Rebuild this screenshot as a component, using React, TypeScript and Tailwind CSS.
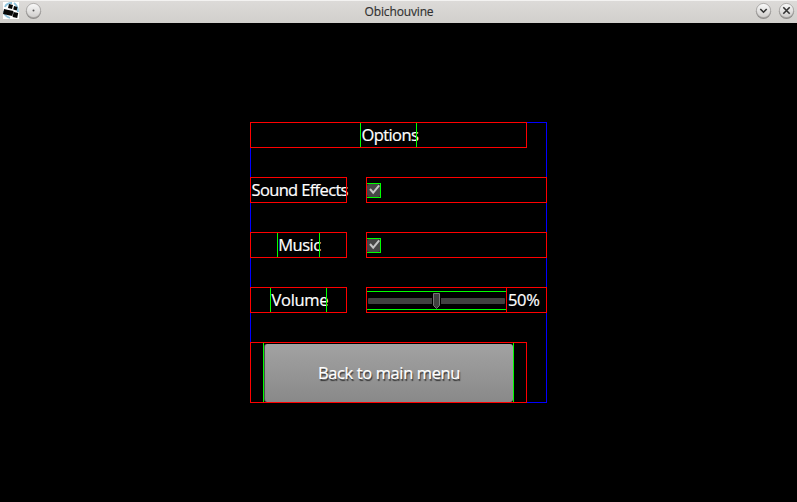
import type { ReactNode } from "react";

function Cell({ className, children }: { className: string; children?: ReactNode }) {
  return (
    <div className={`relative flex ${className}`}>
      {children}
      <div className="pointer-events-none absolute inset-0 border border-[#ff0000]" />
    </div>
  );
}

function Label({ text, box, type, lines = true }: { text: string; box: string; type: string; lines?: boolean }) {
  return (
    <div className={`relative h-[26px] ${box}`}>
      <span className={`block whitespace-nowrap text-[16.5px] leading-[26px] [-webkit-text-stroke:0.2px_white] ${type}`}>{text}</span>
      {lines && <div className="absolute inset-0 border-x border-[#00ff00]" />}
    </div>
  );
}

function Check() {
  return (
    <div className="mt-[6px] h-[15px] w-[15px] border border-[#00ff00] bg-[#202020]">
      <svg width="13" height="13" viewBox="0 0 13 13" className="block">
        <rect width="13" height="13" rx="2.5" fill="#464646" />
        <path d="M3 5 6.2 8.6 12.2 1.4" fill="none" stroke="#c4c4c4" strokeWidth="2" />
      </svg>
    </div>
  );
}

function RoundButton({ children }: { children: ReactNode }) {
  return (
    <svg width="17" height="18" viewBox="0 0 17 18" className="block">
      <defs>
        <linearGradient id="knob" x1="0" y1="0" x2="0" y2="1">
          <stop offset="0" stopColor="#fafafa" />
          <stop offset="1" stopColor="#cfcdcb" />
        </linearGradient>
      </defs>
      <circle cx="8.5" cy="9.3" r="7.6" fill="#8e8c8a" />
      <circle cx="8.5" cy="8.5" r="7.1" fill="url(#knob)" stroke="#a3a19f" strokeWidth="0.8" />
      {children}
    </svg>
  );
}

export default function App() {
  return (
    <div className="h-[502px] w-[797px] overflow-hidden bg-black font-['Open_Sans','Noto_Sans',sans-serif] text-white">
      <header className="flex h-[23px] items-start justify-between border-t border-[#f3f2f1] bg-linear-to-b from-[#dcdad8] to-[#d1cfcc] pr-[2px] pl-[3px] text-[#303030]">
        <div className="flex w-[100px] gap-[5px] pt-px">
          <svg width="17" height="17" viewBox="0 0 17 17">
            <rect width="16" height="17" fill="#fff" />
            <path d="M2 5c1-3 4-4 7-4M11 1c3 2 4 4 4 9M1 9c0 4 3 6 6 7" fill="none" stroke="#8fc3dc" strokeWidth="1.8" />
            <path d="M6 2l4 1-1 4-4-1zM11 4l3.5 1-.8 3.4-3.5-.8zM1 7l4.500 1-1 5-4.500-1zM5.500 8l5 1-1.200 5-5-1zM10.600 10l4.600 1-1 5-4.600-1z" fill="#080808" />
          </svg>
          <RoundButton><circle cx="8.5" cy="8.5" r="1" fill="#555" /></RoundButton>
        </div>
        <h1 className="text-[12px] leading-[21px] font-normal tracking-[-0.15px] [-webkit-text-stroke:0.15px_#303030]">Obichouvine</h1>
        <div className="flex w-[100px] justify-end gap-[6px] pt-px">
          <RoundButton><path d="M5.300 7l3.200 3.200L11.700 7" fill="none" stroke="#333" strokeWidth="1.6" /></RoundButton>
          <RoundButton><path d="M5.300 5.300l6.400 6.400M11.700 5.300l-6.400 6.400" fill="none" stroke="#333" strokeWidth="1.6" /></RoundButton>
        </div>
      </header>

      <main className="mt-[99px] ml-[250px] h-[281px] w-[297px] border border-[#0000ff]">
        <div className="-m-px flex flex-col gap-[29px]">
          <Cell className="h-[26px] w-[277px] pl-[110px]">
            <Label text="Options" box="w-[57px]" type="pl-[1.500px] tracking-[-0.600px]" />
          </Cell>
          <div className="flex gap-[19px]">
            <Cell className="h-[26px] w-[97px]">
              <Label text="Sound Effects" box="w-[97px]" type="pl-[1.500px] tracking-[-0.650px]" lines={false} />
            </Cell>
            <Cell className="h-[26px] w-[181px]"><Check /></Cell>
          </div>
          <div className="flex gap-[19px]">
            <Cell className="h-[26px] w-[97px] pl-[27px]">
              <Label text="Music" box="w-[43px]" type="pl-[1.200px] tracking-[-0.500px]" />
            </Cell>
            <Cell className="h-[26px] w-[181px]"><Check /></Cell>
          </div>
          <div className="flex gap-[19px]">
            <Cell className="h-[26px] w-[97px] pl-[20px]">
              <Label text="Volume" box="w-[57px]" type="pl-[1.500px] tracking-[-0.300px]" />
            </Cell>
            <Cell className="h-[26px] w-[181px]">
              <div className="mt-[4px] flex h-[19px] w-[140px] items-center gap-px border-y border-[#00ff00] pl-[2px]">
                <div className="h-[6px] w-[64px] rounded-l-[1px] bg-[#404040]" />
                <svg width="7" height="16" viewBox="0 0 7 16" className="block">
                  <path d="M.5.5h6v12l-3 3-3-3z" fill="#404040" stroke="#777" />
                </svg>
                <div className="h-[6px] w-[64px] rounded-r-[1px] bg-[#404040]" />
              </div>
              <div className="h-[26px] w-px bg-[#ff0000]" />
              <span className="pl-px text-[16.500px] leading-[26px] tracking-[-0.350px] [-webkit-text-stroke:0.2px_white]">50%</span>
            </Cell>
          </div>
          <Cell className="h-[61px] w-[277px] pl-[13px]">
            <div className="flex h-[61px] w-[251px] border-x border-[#00ff00] pt-[2px]">
              <button className="h-[58px] w-[249px] rounded-[3px] border-l border-[#4a4a4a] bg-linear-to-b from-[#a2a2a2] to-[#898989] text-[16.500px] leading-[58px] tracking-[-0.380px] [-webkit-text-stroke:0.2px_white] [text-shadow:1px_2px_1px_#333]">Back to main menu</button>
            </div>
          </Cell>
        </div>
      </main>
    </div>
  );
}
